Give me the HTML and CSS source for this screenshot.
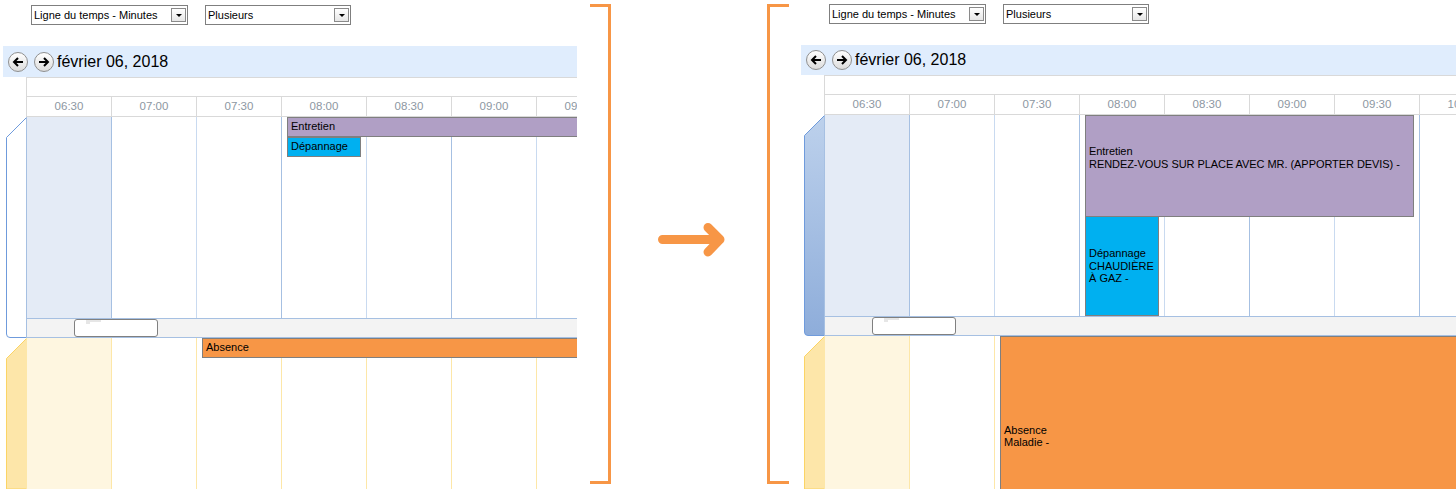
FILE: index.html
```html
<!DOCTYPE html>
<html lang="fr">
<head>
    <meta charset="UTF-8">
    <title>Planning - avant / après</title>
    <link rel="stylesheet" href="styles.css">
</head>
<body>

    <div class="board">
        <!-- Avant -->
        <div class="panel panel-before">
            <div class="filters">
                <div class="combo combo-view"><span>Ligne du temps - Minutes</span><i class="combo-btn"></i></div>
                <div class="combo combo-mode"><span>Plusieurs</span><i class="combo-btn"></i></div>
            </div>
            <div class="date-bar">
                <button type="button" class="nav-btn"><svg width="12" height="12" viewBox="0 0 12 12"><path d="M11 6H2.500M6 2L2 6l4 4"/></svg></button>
                <button type="button" class="nav-btn"><svg width="12" height="12" viewBox="0 0 12 12"><path d="M1 6h8.500M6 2l4 4-4 4"/></svg></button>
                <span class="date-label">février 06, 2018</span>
            </div>
            <div class="hours-blank"></div>
            <div class="hours">
                <div>06:30</div><div>07:00</div><div>07:30</div><div>08:00</div><div>08:30</div><div>09:00</div><div>09:30</div><div>10:00</div>
            </div>
            <div class="group group-blue">
                <svg class="tab" width="21" height="221" viewBox="0 0 21 221"><path class="tab-blue-empty" d="M20.500 0.500L0.500 20.500V217a3.500 3.500 0 0 0 3.500 3.500H20.500"/></svg>
                <div class="lane">
                    <div class="cells">
                        <div></div><div></div><div></div><div></div><div></div><div></div><div></div><div></div>
                    </div>
                    <div class="event event-purple">Entretien</div>
                    <div class="event event-cyan">Dépannage</div>
                    <div class="scroller"><div class="scroller-thumb"></div></div>
                </div>
            </div>
            <div class="group group-yellow">
                <svg class="tab" width="21" height="151" viewBox="0 0 21 151"><path class="tab-yellow" d="M20.500 0.500L0.500 20.500V151H20.500Z"/></svg>
                <div class="lane">
                    <div class="cells">
                        <div></div><div></div><div></div><div></div><div></div><div></div><div></div><div></div>
                    </div>
                    <div class="event event-orange">Absence</div>
                </div>
            </div>
        </div>

        <div class="bracket bracket-close"></div>

        <div class="arrow-box">
            <svg width="72" height="36" viewBox="0 0 72 36"><path d="M7.500 17.500H65M53 5.500L65 17.500L53 30"/></svg>
        </div>

        <div class="bracket bracket-open"></div>

        <!-- Après -->
        <div class="panel panel-after">
            <div class="filters">
                <div class="combo combo-view"><span>Ligne du temps - Minutes</span><i class="combo-btn"></i></div>
                <div class="combo combo-mode"><span>Plusieurs</span><i class="combo-btn"></i></div>
            </div>
            <div class="date-bar">
                <button type="button" class="nav-btn"><svg width="12" height="12" viewBox="0 0 12 12"><path d="M11 6H2.500M6 2L2 6l4 4"/></svg></button>
                <button type="button" class="nav-btn"><svg width="12" height="12" viewBox="0 0 12 12"><path d="M1 6h8.500M6 2l4 4-4 4"/></svg></button>
                <span class="date-label">février 06, 2018</span>
            </div>
            <div class="hours-blank"></div>
            <div class="hours">
                <div>06:30</div><div>07:00</div><div>07:30</div><div>08:00</div><div>08:30</div><div>09:00</div><div>09:30</div><div>10:00</div>
            </div>
            <div class="group group-blue">
                <svg class="tab" width="21" height="221" viewBox="0 0 21 221">
                    <defs>
                        <linearGradient id="tabBlue" x1="0" y1="0" x2="0" y2="1">
                            <stop offset="0" stop-color="#bdd1ec"/>
                            <stop offset="1" stop-color="#8eadda"/>
                        </linearGradient>
                    </defs>
                    <path class="tab-blue-full" d="M20.500 0.500L0.500 20.500V217a3.500 3.500 0 0 0 3.500 3.500H20.500Z"/>
                </svg>
                <div class="lane">
                    <div class="cells">
                        <div></div><div></div><div></div><div></div><div></div><div></div><div></div><div></div>
                    </div>
                    <div class="event event-purple">Entretien<br>RENDEZ-VOUS SUR PLACE AVEC MR. (APPORTER DEVIS) -</div>
                    <div class="event event-cyan">Dépannage<br>CHAUDIÈRE À GAZ -</div>
                    <div class="scroller"><div class="scroller-thumb"></div></div>
                </div>
            </div>
            <div class="group group-yellow">
                <svg class="tab" width="21" height="153" viewBox="0 0 21 153"><path class="tab-yellow" d="M20.500 0.500L0.500 20.500V153H20.500Z"/></svg>
                <div class="lane">
                    <div class="cells">
                        <div></div><div></div><div></div><div></div><div></div><div></div><div></div><div></div>
                    </div>
                    <div class="event event-orange">Absence<br>Maladie -</div>
                </div>
            </div>
        </div>
    </div>

</body>
</html>
```
FILE: styles.css
```css
body {
    margin: 0;
    background: #fff;
    font-family: "Liberation Sans", Arial, sans-serif;
    font-size: 11px;
    color: #000;
}

.board {
    display: flex;
    height: 489px;
    overflow: hidden;
}

.panel {
    flex: none;
    overflow: hidden;
}

.panel-before {
    width: 574px;
    margin-left: 3px;
    padding-top: 5px;
}

.panel-after {
    width: 655px;
    margin-left: 12px;
    padding-top: 4px;
}

/* Combos */
.filters {
    display: flex;
    gap: 17px;
    height: 20px;
    padding-left: 28px;
    margin-bottom: 21px;
}

.combo {
    display: flex;
    align-items: center;
    justify-content: space-between;
    box-sizing: border-box;
    height: 20px;
    padding: 0 1px 0 2px;
    border: 1px solid #7f7f7f;
    background: #fff;
}

.combo-view {
    width: 157px;
}

.combo-mode {
    width: 146px;
}

.combo-btn {
    display: flex;
    align-items: center;
    justify-content: center;
    box-sizing: border-box;
    width: 15px;
    height: 14px;
    border: 1px solid #8a8a8a;
    background: linear-gradient(#fff, #e6e6e6);
}

.combo-btn::after {
    content: "";
    border-top: 3px solid #000;
    border-left: 3px solid transparent;
    border-right: 3px solid transparent;
}

/* Date bar */
.date-bar {
    display: flex;
    align-items: center;
    gap: 6px;
    box-sizing: border-box;
    padding-left: 5px;
    background: #e0edfd;
}

.panel-before .date-bar {
    height: 31px;
}

.panel-after .date-bar {
    height: 30px;
}

.nav-btn {
    display: flex;
    align-items: center;
    justify-content: center;
    box-sizing: border-box;
    width: 20px;
    height: 20px;
    padding: 0;
    border: 1px solid #8f8f8f;
    border-radius: 50%;
    background: linear-gradient(#fff, #dcdcdc);
}

.nav-btn path {
    fill: none;
    stroke: #000;
    stroke-width: 2;
}

.date-label {
    margin-left: -3px;
    font-size: 16px;
}

/* Hour header */
.hours-blank {
    box-sizing: border-box;
    height: 20px;
    margin-left: 23px;
    border-top: 1px solid #d9d9d9;
    border-left: 1px solid #d9d9d9;
    border-bottom: 1px solid #d9d9d9;
}

.hours {
    display: flex;
    height: 20px;
    box-sizing: border-box;
    margin-left: 23px;
    border-left: 1px solid #d9d9d9;
    border-bottom: 1px solid #d9d9d9;
    color: #8d97a2;
    font-size: 11.500px;
}

.hours div {
    flex: none;
    box-sizing: border-box;
    width: 85px;
    border-right: 1px solid #d9d9d9;
    line-height: 19px;
    text-align: center;
}

/* Resource groups */
.group {
    display: flex;
}

.group-blue {
    height: 221px;
}

.group-yellow {
    height: 153px;
}

.tab {
    display: block;
    flex: none;
    margin-left: 3px;
    margin-right: -1px;
}

.tab path {
    stroke-width: 1;
}

.tab-blue-empty {
    fill: #fff;
    stroke: #6f9bdc;
}

.tab-blue-full {
    fill: url(#tabBlue);
    stroke: #6f9bdc;
}

.tab-yellow {
    fill: #fde6a9;
    stroke: #fbd465;
}

.lane {
    position: relative;
    flex: 1;
    min-width: 0;
    overflow: hidden;
}

.cells {
    display: flex;
    height: 100%;
}

.cells div {
    flex: none;
    box-sizing: border-box;
    width: 85px;
    border-right: 1px solid #c9daf0;
}

.cells div:nth-child(odd) {
    border-right-color: #a6c0e2;
}

.cells div:first-child {
    background: #e4ebf6;
}

.group-blue .cells {
    border-left: 1px solid #a6c0e2;
}

.group-yellow .cells {
    border-left: 1px solid #fde7a8;
}

.group-yellow .cells div,
.group-yellow .cells div:nth-child(odd) {
    border-right-color: #fde7a8;
}

.group-yellow .cells div:first-child {
    background: #fef6e0;
}

/* Scroller under the blue group */
.scroller {
    position: absolute;
    left: 0;
    right: 0;
    bottom: 0;
    box-sizing: border-box;
    height: 20px;
    border-top: 1px solid #a6c0e2;
    border-bottom: 1px solid #a6c0e2;
    border-left: 1px solid #a6c0e2;
    background: #f3f3f3;
}

.scroller-thumb {
    position: relative;
    box-sizing: border-box;
    width: 84px;
    height: 18px;
    margin-left: 47px;
    border: 1px solid #808080;
    border-radius: 3px;
    background: #fff;
}

.scroller-thumb::after {
    content: "";
    position: absolute;
    left: 11px;
    top: 0;
    width: 15px;
    height: 2px;
    background: #e6e6e6;
}

.scroller-thumb::before {
    content: "";
    position: absolute;
    left: 11px;
    top: 2px;
    width: 4px;
    height: 2px;
    background: #e6e6e6;
}

/* Events */
.event {
    position: absolute;
    display: flex;
    flex-direction: column;
    justify-content: center;
    box-sizing: border-box;
    padding-left: 3px;
    border: 1px solid #7f7f7f;
    line-height: 12.500px;
}

.event-purple {
    background: #b09fc5;
}

.event-cyan {
    background: #00b0f0;
}

.event-orange {
    background: #f79646;
}

.panel-before .event {
    height: 20px;
    padding-bottom: 2px;
}

.panel-before .event-purple {
    left: 261px;
    top: 0;
    width: 400px;
}

.panel-before .event-cyan {
    left: 261px;
    top: 20px;
    width: 74px;
}

.panel-before .event-orange {
    left: 176px;
    top: 0;
    width: 500px;
}

.panel-after .event-purple {
    left: 261px;
    top: 0;
    width: 329px;
    height: 102px;
    padding-bottom: 16px;
    line-height: 13px;
    letter-spacing: -0.060px;
}

.panel-after .event-cyan {
    left: 261px;
    top: 101px;
    width: 74px;
    height: 100px;
}

.panel-after .event-orange {
    left: 176px;
    top: 0;
    width: 500px;
    height: 200px;
}

/* Orange brackets and arrow */
.bracket {
    flex: none;
    box-sizing: border-box;
    width: 21px;
    height: 480px;
    margin-top: 4px;
    border-top: 3px solid #f79646;
    border-bottom: 3px solid #f79646;
}

.bracket-close {
    margin-left: 13px;
    border-right: 3px solid #f79646;
}

.bracket-open {
    width: 22px;
    border-left: 3px solid #f79646;
}

.arrow-box {
    flex: none;
    box-sizing: border-box;
    width: 156px;
    padding: 222px 0 0 44px;
}

.arrow-box svg {
    display: block;
}

.arrow-box path {
    fill: none;
    stroke: #f79646;
    stroke-width: 9;
    stroke-linecap: round;
    stroke-linejoin: round;
}
```
